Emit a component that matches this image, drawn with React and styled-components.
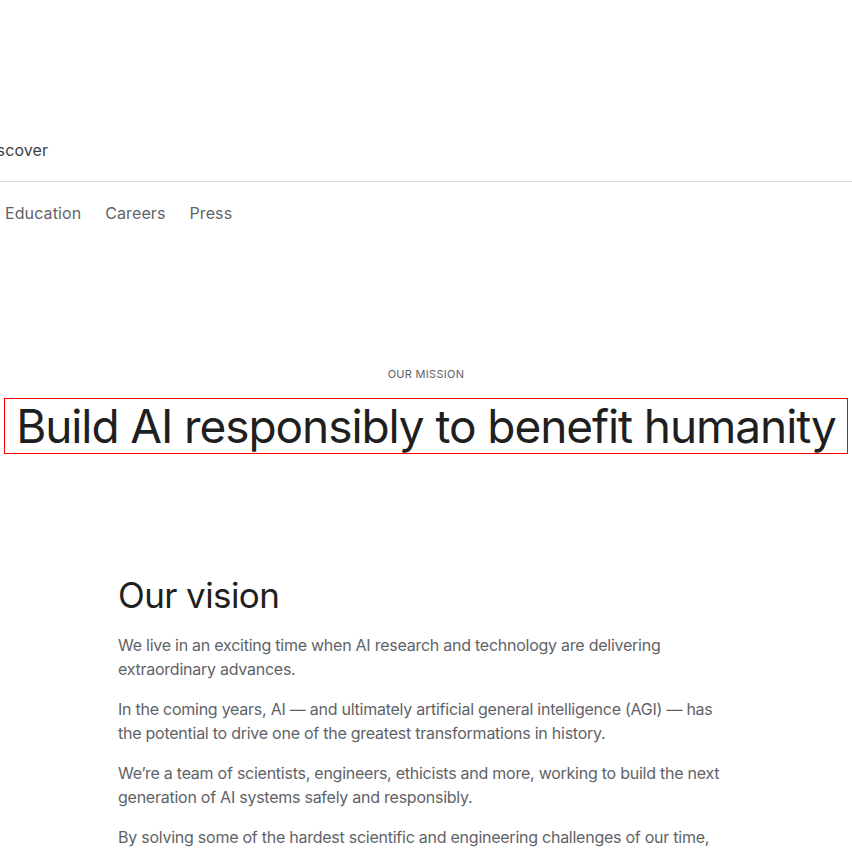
import React from 'react'
import styled, { createGlobalStyle } from 'styled-components'

const GlobalStyle = createGlobalStyle`
  body {
    margin: 0;
    background: #fff;
    font-family: Inter, "Noto Sans", Arial, sans-serif;
    color: #202124;
    overflow: hidden;
  }
`

const topLinks = ['Discover']
const subLinks = ['Education', 'Careers', 'Press']

const paragraphs = [
  'We live in an exciting time when AI research and technology are delivering extraordinary advances.',
  'In the coming years, AI \u2014 and ultimately artificial general intelligence (AGI) \u2014 has the potential to drive one of the greatest transformations in history.',
  'We\u2019re a team of scientists, engineers, ethicists and more, working to build the next generation of AI systems safely and responsibly.',
  'By solving some of the hardest scientific and engineering challenges of our time, we\u2019re working to create breakthrough technologies that could advance science, transform work, serve diverse communities.',
]

function App() {
  return (
    <>
      <GlobalStyle />
      <TopBar>
        <TopNav>
          {topLinks.map(l => <TopLink key={l}>{l}</TopLink>)}
        </TopNav>
      </TopBar>
      <SubNav>
        {subLinks.map(l => <SubLink key={l}>{l}</SubLink>)}
      </SubNav>
      <Mission>
        <Eyebrow>Our mission</Eyebrow>
        <Headline>Build AI responsibly to benefit humanity</Headline>
      </Mission>
      <Vision>
        <VisionTitle>Our vision</VisionTitle>
        {paragraphs.map((p, i) => <Para key={i}>{p}</Para>)}
      </Vision>
    </>
  )
}

export default App

const TopBar = styled.header`
  height: 181px;
  border-bottom: 1px solid #dadce0;
  display: flex;
  align-items: flex-end;
`

const TopNav = styled.nav`
  display: flex;
  gap: 24px;
  margin-left: -19px;
  padding-bottom: 21px;
`

const TopLink = styled.a`
  font-size: 16px;
  line-height: 20px;
  letter-spacing: 0.1px;
  color: #3c4043;
`

const SubNav = styled.nav`
  display: flex;
  align-items: center;
  gap: 24px;
  height: 62px;
  padding-left: 5px;
`

const SubLink = styled.a`
  font-size: 16px;
  line-height: 20px;
  letter-spacing: 0.1px;
  color: #5f6368;
`

const Mission = styled.section`
  padding-top: 122px;
  display: flex;
  flex-direction: column;
  align-items: center;
`

const Eyebrow = styled.p`
  margin: 0 0 16px;
  font-size: 11px;
  line-height: 16px;
  letter-spacing: 0.3px;
  text-transform: uppercase;
  color: #5f6368;
`

const Headline = styled.h1`
  box-sizing: border-box;
  width: calc(100% - 8px);
  margin: 0 4px;
  border: 1px solid #ff0000;
  text-align: center;
  white-space: nowrap;
  font-size: 46px;
  font-weight: 400;
  line-height: 54px;
  letter-spacing: -1.08px;
  color: #1f1f1f;
`

const Vision = styled.section`
  padding: 119px 0 0 118px;
  max-width: 610px;
`

const VisionTitle = styled.h2`
  margin: 0 0 16px;
  font-size: 35px;
  font-weight: 400;
  line-height: 44px;
  letter-spacing: -0.6px;
  color: #1f1f1f;
`

const Para = styled.p`
  margin: 0 0 16px;
  font-size: 16px;
  line-height: 24px;
  letter-spacing: -0.25px;
  color: #5f6368;
`
